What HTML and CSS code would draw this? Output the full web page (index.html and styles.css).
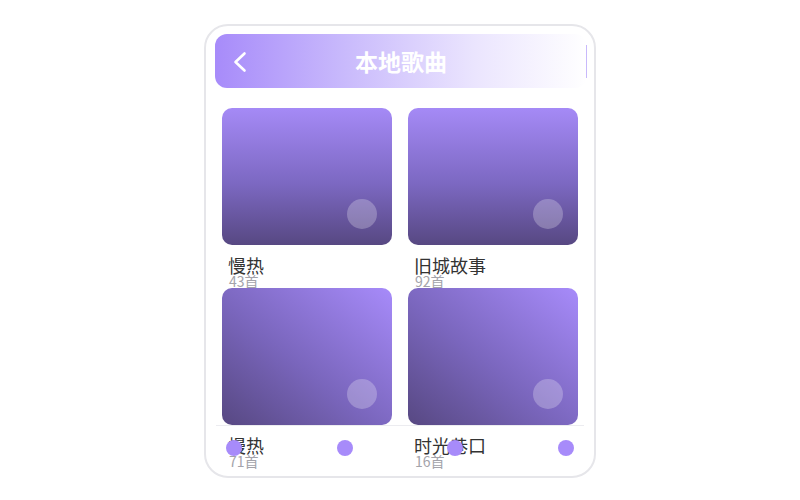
FILE: index.html
```html
<!DOCTYPE html>
<html lang="zh">
<head>
<meta charset="utf-8">
<title>本地歌曲</title>
<link rel="stylesheet" href="styles.css">
</head>
<body>
<div class="page">
  <div class="phone">
    <header class="topbar">
      <div class="topbar-left">
        <svg class="back" width="24" height="24" viewBox="0 0 24 24"><path d="M16.5 3.5 L7.5 12 L16.5 20.5" fill="none" stroke="#fff" stroke-width="2.6" stroke-linecap="round" stroke-linejoin="round"/></svg>
      </div>
      <h1 class="topbar-title">本地歌曲</h1>
      <div class="topbar-right"><span class="topbar-line"></span></div>
    </header>
    <div class="grid">
      <div class="album">
        <div class="cover cover-v"><span class="play"></span></div>
        <div class="album-name">慢热</div>
        <div class="album-count">43首</div>
      </div>
      <div class="album">
        <div class="cover cover-v"><span class="play"></span></div>
        <div class="album-name">旧城故事</div>
        <div class="album-count">92首</div>
      </div>
      <div class="album">
        <div class="cover cover-d"><span class="play"></span></div>
        <div class="album-name">慢热</div>
        <div class="album-count">71首</div>
      </div>
      <div class="album">
        <div class="cover cover-d"><span class="play"></span></div>
        <div class="album-name">时光巷口</div>
        <div class="album-count">16首</div>
      </div>
    </div>
    <nav class="dots">
      <span class="dot"></span>
      <span class="dot"></span>
      <span class="dot"></span>
      <span class="dot"></span>
    </nav>
  </div>
</div>
</body>
</html>
```
FILE: styles.css
```css
* { box-sizing: border-box; }
html, body { margin: 0; padding: 0; background: #fff; }
body { font-family: "Noto Sans CJK SC", "Noto Sans", sans-serif; }
.page { padding-top: 24px; }
.phone {
  position: relative;
  width: 392px;
  height: 454px;
  margin: 0 auto;
  border: 2px solid #e6e6ea;
  border-radius: 24px;
  padding-top: 8px;
  overflow: hidden;
  background: #fff;
}
.topbar {
  display: grid;
  grid-template-columns: 1fr auto 1fr;
  align-items: center;
  height: 54px;
  margin: 0 7px 0 9px;
  border-radius: 12px;
  background: linear-gradient(to right, #a78bfa 0%, #c9bafc 35%, #ebe5fe 70%, #ffffff 100%);
}
.topbar-left { display: flex; align-items: center; padding-left: 13px; padding-top: 2px; }
.back { display: block; }
.topbar-title {
  margin: 0;
  font-size: 23px;
  font-weight: 700;
  color: #fff;
  line-height: 30px;
}
.topbar-right { display: flex; justify-content: flex-end; align-items: center; }
.topbar-line { display: block; width: 1px; height: 33px; background: #c8b9fb; }
.grid {
  display: grid;
  grid-template-columns: 170px 170px;
  grid-auto-rows: 180px;
  column-gap: 16px;
  padding: 20px 16px 0 16px;
}
.album { min-width: 0; }
.cover {
  position: relative;
  height: 137px;
  border-radius: 10px;
}
.cover-v { background: linear-gradient(to bottom, #a58af6 0%, #7c68c2 55%, #574882 100%); }
.cover-d { background: linear-gradient(to bottom left, #a78bfa 0%, #7a66bd 55%, #574882 100%); }
.play {
  position: absolute;
  right: 15px;
  bottom: 16px;
  width: 30px;
  height: 30px;
  border-radius: 50%;
  background: rgba(255, 255, 255, 0.25);
}
.album-name {
  margin-top: 11px;
  padding-left: 6px;
  font-size: 18px;
  line-height: 18px;
  color: #333;
}
.album-count {
  padding-left: 7px;
  font-size: 14px;
  line-height: 14px;
  color: #a3a3aa;
}
.dots {
  position: absolute;
  left: 10px;
  right: 10px;
  bottom: 7px;
  height: 44px;
  border-top: 1px solid #ececf0;
  display: flex;
  align-items: center;
  justify-content: space-between;
  padding: 0 10px;
}
.dot {
  width: 16px;
  height: 16px;
  border-radius: 50%;
  background: #a78bfa;
}
```
